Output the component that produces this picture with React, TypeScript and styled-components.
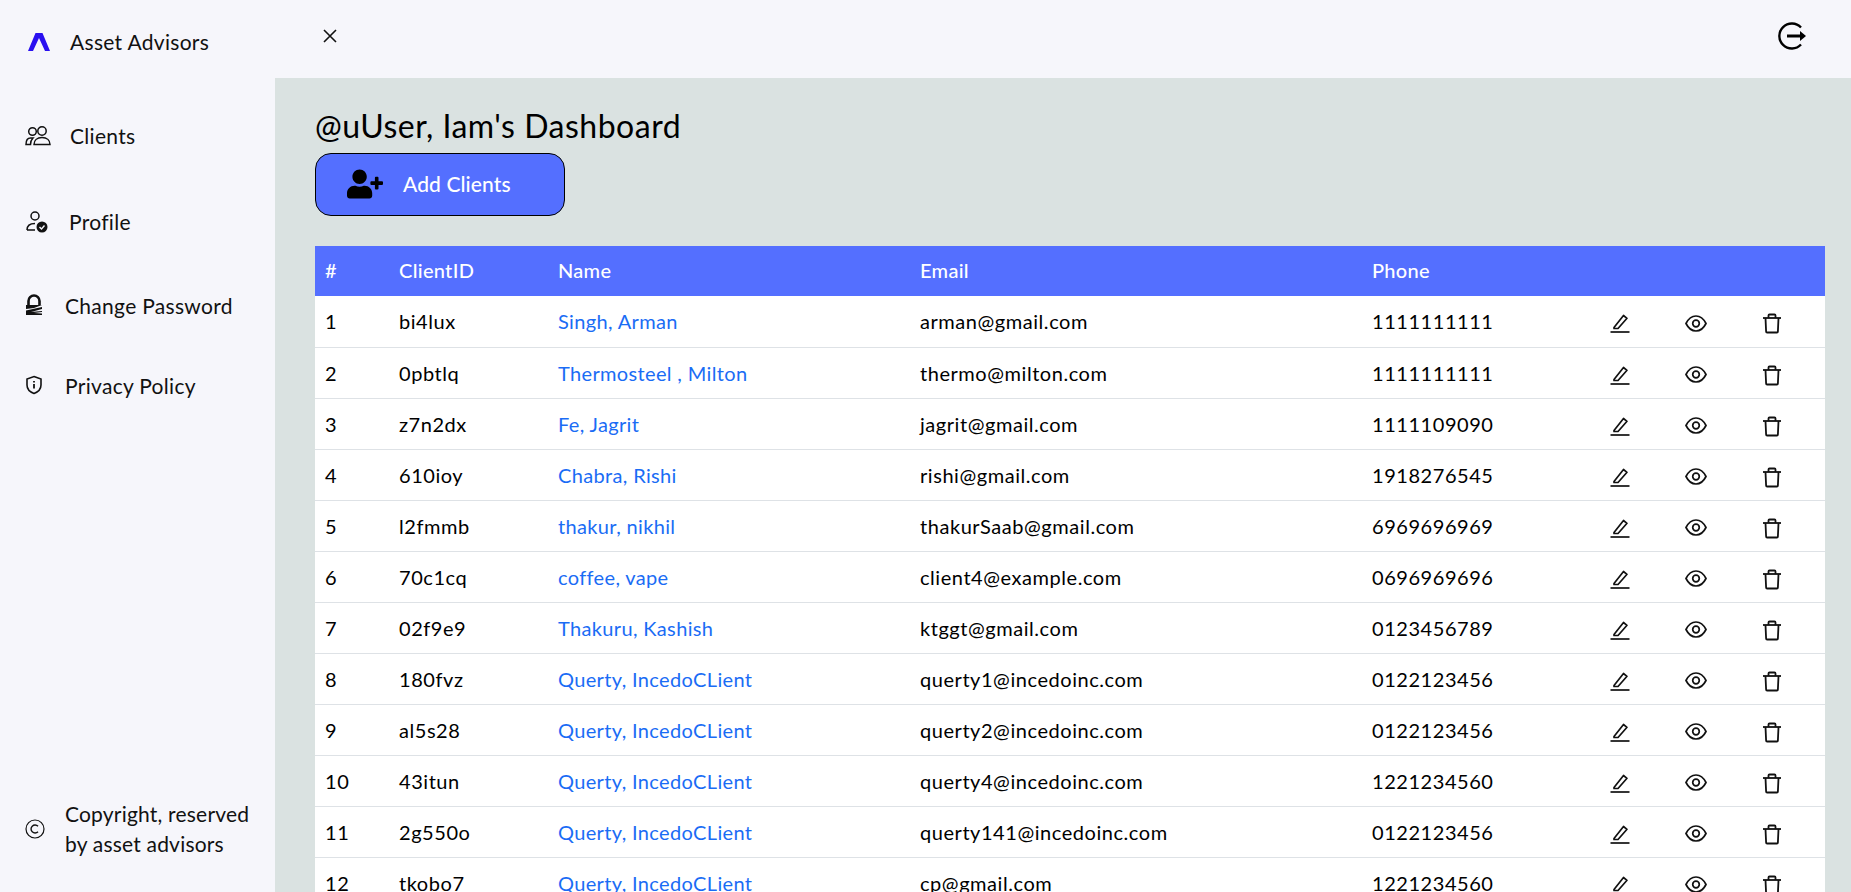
import React from "react";
import styled, { createGlobalStyle } from "styled-components";
import { FaUserPlus } from "react-icons/fa";

const GlobalStyle = createGlobalStyle`
  *, *::before, *::after { box-sizing: border-box; }
  html, body { margin: 0; padding: 0; height: 100%; overflow: hidden; }
  body { font-family: "Lato", "Open Sans", sans-serif; color: #000; background: #f6f6fb; }
`;

const Layout = styled.div`
  display: flex;
  width: 100%;
  height: 892px;
  overflow: hidden;
`;

const Sidebar = styled.aside`
  width: 275px;
  flex-shrink: 0;
  display: flex;
  flex-direction: column;
  background: #f6f6fb;
`;

const Brand = styled.div`
  display: flex;
  align-items: center;
  gap: 19px;
  height: 83px;
  padding-left: 27px;
  font-size: 21px;
  letter-spacing: 0.3px;
  color: #111;
`;

const NavList = styled.nav`
  display: flex;
  flex-direction: column;
  flex: 1;
  padding-top: 9px;
`;

const NavItem = styled.a<{ $gap: number; $height: number }>`
  display: flex;
  align-items: center;
  gap: ${(p) => p.$gap}px;
  height: ${(p) => p.$height}px;
  padding-left: 25px;
  font-size: 21px;
  letter-spacing: 0.3px;
  color: #111;
`;

const Copyright = styled.div`
  display: flex;
  align-items: center;
  gap: 20px;
  padding: 0 0 33px 25px;
  font-size: 21px;
  letter-spacing: 0.2px;
  line-height: 30px;
  color: #111;
`;

const Content = styled.div`
  flex: 1;
  min-width: 0;
  display: flex;
  flex-direction: column;
`;

const Topbar = styled.header`
  height: 78px;
  flex-shrink: 0;
  display: flex;
  align-items: center;
  justify-content: space-between;
  padding: 0 44px 6px 47px;
  background: #f6f6fb;
`;

const Main = styled.main`
  flex: 1;
  min-height: 0;
  padding: 28px 26px 0 40px;
  background: #dae2e1;
`;

const Title = styled.h1`
  margin: 0 0 7px;
  font-size: 32px;
  letter-spacing: 0.5px;
  line-height: 40px;
  font-weight: 400;
`;

const AddButton = styled.button`
  display: flex;
  align-items: center;
  gap: 20px;
  width: 250px;
  height: 63px;
  padding: 0 0 2px 31px;
  margin-bottom: 30px;
  background: #546fff;
  border: 1px solid #000;
  border-radius: 16px;
  color: #fff;
  font: 500 21px "Lato", sans-serif;
  letter-spacing: 0.1px;
`;

const Table = styled.table`
  width: 100%;
  table-layout: fixed;
  border-collapse: collapse;
  background: #fff;
`;

const Column = styled.col<{ $width: number }>`
  width: ${(p) => p.$width}px;
`;

const HeadRow = styled.tr`
  height: 50px;
  background: #546fff;
`;

const HeadCell = styled.th`
  padding: 0 10px 2px;
  text-align: left;
  font-size: 20px;
  letter-spacing: 0.3px;
  font-weight: 500;
  color: #fff;
`;

const Row = styled.tr`
  height: 51px;
  border-bottom: 1px solid #dee2e6;
`;

const Cell = styled.td`
  padding: 0 10px;
  font-size: 20px;
  letter-spacing: 0.55px;
  color: #000;
  white-space: nowrap;
`;

const NameLink = styled.a`
  color: #1a6cf5;
  letter-spacing: 0.35px;
`;

const ActionCell = styled.td<{ $inset?: number }>`
  padding: 4px ${(p) => p.$inset ?? 0}px 0 0;
  text-align: center;
  line-height: 0;
`;

const Glyph = styled.svg`
  display: inline-block;
  flex-shrink: 0;
`;

const clients = [
  ["bi4lux", "Singh, Arman", "arman@gmail.com", "1111111111"],
  ["0pbtlq", "Thermosteel , Milton", "thermo@milton.com", "1111111111"],
  ["z7n2dx", "Fe, Jagrit", "jagrit@gmail.com", "1111109090"],
  ["610ioy", "Chabra, Rishi", "rishi@gmail.com", "1918276545"],
  ["l2fmmb", "thakur, nikhil", "thakurSaab@gmail.com", "6969696969"],
  ["70c1cq", "coffee, vape", "client4@example.com", "0696969696"],
  ["02f9e9", "Thakuru, Kashish", "ktggt@gmail.com", "0123456789"],
  ["180fvz", "Querty, IncedoCLient", "querty1@incedoinc.com", "0122123456"],
  ["al5s28", "Querty, IncedoCLient", "querty2@incedoinc.com", "0122123456"],
  ["43itun", "Querty, IncedoCLient", "querty4@incedoinc.com", "1221234560"],
  ["2g550o", "Querty, IncedoCLient", "querty141@incedoinc.com", "0122123456"],
  ["tkobo7", "Querty, IncedoCLient", "cp@gmail.com", "1221234560"],
];

const LogoIcon = () => (
  <Glyph width="24" height="20" viewBox="0 0 24 20">
    <path d="M1 19 8.500 1h7L23 19h-5L12 6 6 19z" fill="#2a10f0" />
  </Glyph>
);

const ClientsIcon = () => (
  <Glyph width="26" height="20" viewBox="0 0 26 20" fill="none" stroke="#111" strokeWidth="1.500">
    <circle cx="7.500" cy="5.500" r="3.800" />
    <circle cx="17" cy="5" r="4.200" />
    <path d="M1 18.500c0-3.500 1.500-6.500 4.500-6.500H8c-1.500 1.500-2.500 4-2.500 6.500z" />
    <path d="M9 18.500c0-4 3-7 8-7s8 3 8 7z" />
  </Glyph>
);

const ProfileIcon = () => (
  <Glyph width="24" height="24" viewBox="0 0 24 24">
    <circle cx="10" cy="7" r="4" fill="none" stroke="#111" strokeWidth="1.500" />
    <path d="M2 21c0-4 3-6.500 8-6.500M2 21h8" fill="none" stroke="#111" strokeWidth="1.500" />
    <circle cx="17" cy="18" r="5.500" fill="#111" />
    <path d="M14.500 18l2 2 3-3.500" fill="none" stroke="#f6f6fb" strokeWidth="1.400" />
  </Glyph>
);

const LockIcon = () => (
  <Glyph width="18" height="22" viewBox="0 0 18 22">
    <path d="M3.500 11V7a5.500 5.500 0 0 1 11 0v4" fill="none" stroke="#111" strokeWidth="2.600" />
    <path d="M1 11h16l-8 3-8 1zM1 16.500 17 13v2L6 18l11-1v1l-8 1 8 .5V21H1z" fill="#111" />
  </Glyph>
);

const ShieldIcon = () => (
  <Glyph width="18" height="20" viewBox="0 0 18 20" fill="none" stroke="#111" strokeWidth="1.600">
    <path d="M9 1.500 16 4v6c0 4.200-3 7-7 8.500C5 17 2 14.200 2 10V4z" />
    <path d="M9 9v4.500M9 6v1.500" strokeWidth="1.800" />
  </Glyph>
);

const CopyrightIcon = () => (
  <Glyph width="20" height="20" viewBox="0 0 20 20" fill="none" stroke="#111" strokeWidth="1.200">
    <circle cx="10" cy="10" r="9" />
    <path d="M13 7.300a4 4 0 1 0 0 5.400" strokeWidth="1.400" />
  </Glyph>
);

const CloseIcon = () => (
  <Glyph width="16" height="16" viewBox="0 0 16 16" fill="none" stroke="#111" strokeWidth="1.600">
    <path d="M2 2l12 12M14 2 2 14" />
  </Glyph>
);

const LogoutIcon = () => (
  <Glyph width="30" height="30" viewBox="0 0 30 30" fill="none" stroke="#000">
    <path d="M24 6.500A12.500 12.500 0 1 0 24 23.500" strokeWidth="2.400" />
    <path d="M10 15h15" strokeWidth="3" />
    <path d="M23 10 29 15l-6 5z" fill="#000" stroke="none" />
  </Glyph>
);

const EditIcon = () => (
  <Glyph width="20" height="20" viewBox="0 0 20 20" fill="none" stroke="#111" strokeWidth="1.700">
    <path d="M4 14.500 13.500 2.500l3.500 2.800L8 15.500H4z" strokeLinejoin="round" />
    <path d="M.5 19h19" />
  </Glyph>
);

const EyeIcon = () => (
  <Glyph width="22" height="17" viewBox="0 0 22 17" fill="none" stroke="#111" strokeWidth="1.700">
    <path d="M1 8.500C3.500 3.500 7 1 11 1s7.500 2.500 10 7.500C18.500 13.500 15 16 11 16S3.500 13.500 1 8.500z" />
    <circle cx="11" cy="8.500" r="3.300" />
  </Glyph>
);

const TrashIcon = () => (
  <Glyph width="20" height="22" viewBox="0 0 20 22" fill="none" stroke="#111" strokeWidth="1.800">
    <path d="M1 6h18" />
    <path d="M3.500 6l.6 13.500a1 1 0 0 0 1 1h9.800a1 1 0 0 0 1-1L16.500 6" />
    <path d="M6.500 6V3.500a1 1 0 0 1 1-1h5a1 1 0 0 1 1 1V6" />
  </Glyph>
);

export default function App() {
  return (
    <Layout>
      <GlobalStyle />
      <Sidebar>
        <Brand>
          <LogoIcon />
          Asset Advisors
        </Brand>
        <NavList>
          <NavItem $gap={19} $height={87}><ClientsIcon />Clients</NavItem>
          <NavItem $gap={20} $height={84}><ProfileIcon />Profile</NavItem>
          <NavItem $gap={22} $height={84}><LockIcon />Change Password</NavItem>
          <NavItem $gap={22} $height={76}><ShieldIcon />Privacy Policy</NavItem>
        </NavList>
        <Copyright>
          <CopyrightIcon />
          <div>Copyright, reserved<br />by asset advisors</div>
        </Copyright>
      </Sidebar>
      <Content>
        <Topbar>
          <CloseIcon />
          <LogoutIcon />
        </Topbar>
        <Main>
          <Title>@uUser, Iam's Dashboard</Title>
          <AddButton>
            <FaUserPlus size={36} color="#000" />
            Add Clients
          </AddButton>
          <Table>
            <colgroup>
              <Column $width={74} />
              <Column $width={159} />
              <Column $width={362} />
              <Column $width={452} />
              <Column $width={220} />
              <Column $width={76} />
              <Column $width={76} />
              <Column $width={91} />
            </colgroup>
            <thead>
              <HeadRow>
                <HeadCell>#</HeadCell>
                <HeadCell>ClientID</HeadCell>
                <HeadCell>Name</HeadCell>
                <HeadCell>Email</HeadCell>
                <HeadCell>Phone</HeadCell>
                <HeadCell />
                <HeadCell />
                <HeadCell />
              </HeadRow>
            </thead>
            <tbody>
              {clients.map(([id, name, email, phone], i) => (
                <Row key={id}>
                  <Cell>{i + 1}</Cell>
                  <Cell>{id}</Cell>
                  <Cell><NameLink>{name}</NameLink></Cell>
                  <Cell>{email}</Cell>
                  <Cell>{phone}</Cell>
                  <ActionCell><EditIcon /></ActionCell>
                  <ActionCell><EyeIcon /></ActionCell>
                  <ActionCell $inset={15}><TrashIcon /></ActionCell>
                </Row>
              ))}
            </tbody>
          </Table>
        </Main>
      </Content>
    </Layout>
  );
}
